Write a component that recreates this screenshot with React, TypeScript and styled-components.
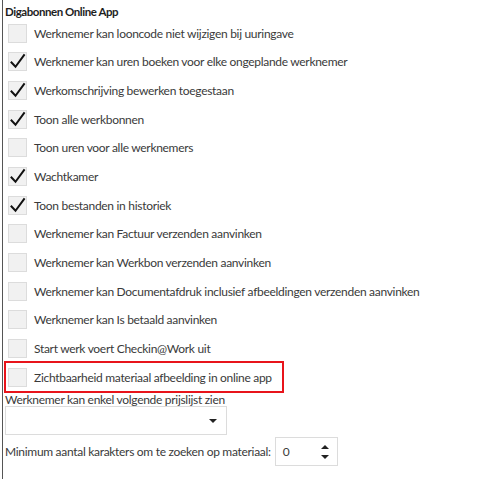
import styled, { createGlobalStyle } from 'styled-components';

const GlobalStyle = createGlobalStyle`
    html, body {
        margin: 0;
        padding: 0;
        background: #fff;
    }
    body {
        font-family: "Segoe UI", Lato, "Open Sans", sans-serif;
        font-size: 12px;
        letter-spacing: -0.3px;
        color: #3a3a3a;
    }
`

const Panel = styled.section`
    margin-left: 2px;
    border-left: 1px solid #555;
    min-height: 479px;
    padding-left: 2px;
    box-sizing: border-box;
`

const Title = styled.h3`
    margin: 0;
    padding-top: 4px;
    height: 15px;
    line-height: 15px;
    font-size: 11.5px;
    letter-spacing: -0.45px;
    font-weight: 700;
    color: #1e1e1e;
`

const List = styled.div`
    display: flex;
    flex-direction: column;
`

const Row = styled.label<{ $highlight?: boolean }>`
    display: flex;
    align-items: center;
    gap: 7px;
    height: 28.65px;
    box-sizing: border-box;
    padding-left: ${p => (p.$highlight ? '2px' : '3px')};
    margin-left: ${p => (p.$highlight ? '1px' : '0')};
    width: ${p => (p.$highlight ? '276px' : 'auto')};
    outline: ${p => (p.$highlight ? '2px solid #e8141b' : 'none')};
`

const Box = styled.span`
    width: 19px;
    height: 19px;
    flex: none;
    background: #f1f1f1;
    border: 1px solid #dcdcdc;
    box-sizing: border-box;
    display: flex;
    align-items: center;
    justify-content: center;
`

const Label = styled.span`
    white-space: nowrap;
`

const FieldLabel = styled.div`
    margin-top: 2px;
    line-height: 13px;
`

const Select = styled.div`
    width: 222px;
    height: 29px;
    border: 1px solid #dcdcdc;
    box-sizing: border-box;
    display: flex;
    align-items: center;
    justify-content: flex-end;
    padding-right: 9px;
`

const Caret = styled.span`
    width: 0;
    height: 0;
    border-left: 4px solid transparent;
    border-right: 4px solid transparent;
    border-top: 4px solid #222;
`

const NumberRow = styled.div`
    display: flex;
    align-items: center;
    gap: 4px;
    margin-top: 2px;
`

const NumberBox = styled.div`
    width: 63px;
    height: 29px;
    border: 1px solid #dcdcdc;
    box-sizing: border-box;
    display: flex;
    align-items: center;
    justify-content: space-between;
    padding: 0 8px 0 7px;
`

const Spinner = styled.div`
    display: flex;
    flex-direction: column;
    gap: 6px;
`

const Arrow = styled.span<{ $up?: boolean }>`
    width: 0;
    height: 0;
    border-left: 4px solid transparent;
    border-right: 4px solid transparent;
    ${p => (p.$up ? 'border-bottom: 4px solid #222;' : 'border-top: 4px solid #222;')}
`

const opties = [
    { tekst: 'Werknemer kan looncode niet wijzigen bij uuringave', aan: false },
    { tekst: 'Werknemer kan uren boeken voor elke ongeplande werknemer', aan: true },
    { tekst: 'Werkomschrijving bewerken toegestaan', aan: true },
    { tekst: 'Toon alle werkbonnen', aan: true },
    { tekst: 'Toon uren voor alle werknemers', aan: false },
    { tekst: 'Wachtkamer', aan: true },
    { tekst: 'Toon bestanden in historiek', aan: true },
    { tekst: 'Werknemer kan Factuur verzenden aanvinken', aan: false },
    { tekst: 'Werknemer kan Werkbon verzenden aanvinken', aan: false },
    { tekst: 'Werknemer kan Documentafdruk inclusief afbeeldingen verzenden aanvinken', aan: false },
    { tekst: 'Werknemer kan Is betaald aanvinken', aan: false },
    { tekst: 'Start werk voert Checkin@Work uit', aan: false },
    { tekst: 'Zichtbaarheid materiaal afbeelding in online app', aan: false, markering: true },
];

function Vinkje() {
    return (
        <svg width="17" height="17" viewBox="0 0 17 17">
            <path d="M2.5 9.5 L6.5 13.8 L15 2.2" fill="none" stroke="#111" strokeWidth="2" strokeLinecap="square" />
        </svg>
    );
}

export default function App() {
    return (
        <>
            <GlobalStyle />
            <Panel>
                <Title>Digabonnen Online App</Title>
                <List>
                    {opties.map(optie => (
                        <Row key={optie.tekst} $highlight={optie.markering}>
                            <Box>{optie.aan && <Vinkje />}</Box>
                            <Label>{optie.tekst}</Label>
                        </Row>
                    ))}
                </List>
                <FieldLabel>Werknemer kan enkel volgende prijslijst zien</FieldLabel>
                <Select><Caret /></Select>
                <NumberRow>
                    <span>Minimum aantal karakters om te zoeken op materiaal:</span>
                    <NumberBox>
                        <span>0</span>
                        <Spinner>
                            <Arrow $up />
                            <Arrow />
                        </Spinner>
                    </NumberBox>
                </NumberRow>
            </Panel>
        </>
    );
}
